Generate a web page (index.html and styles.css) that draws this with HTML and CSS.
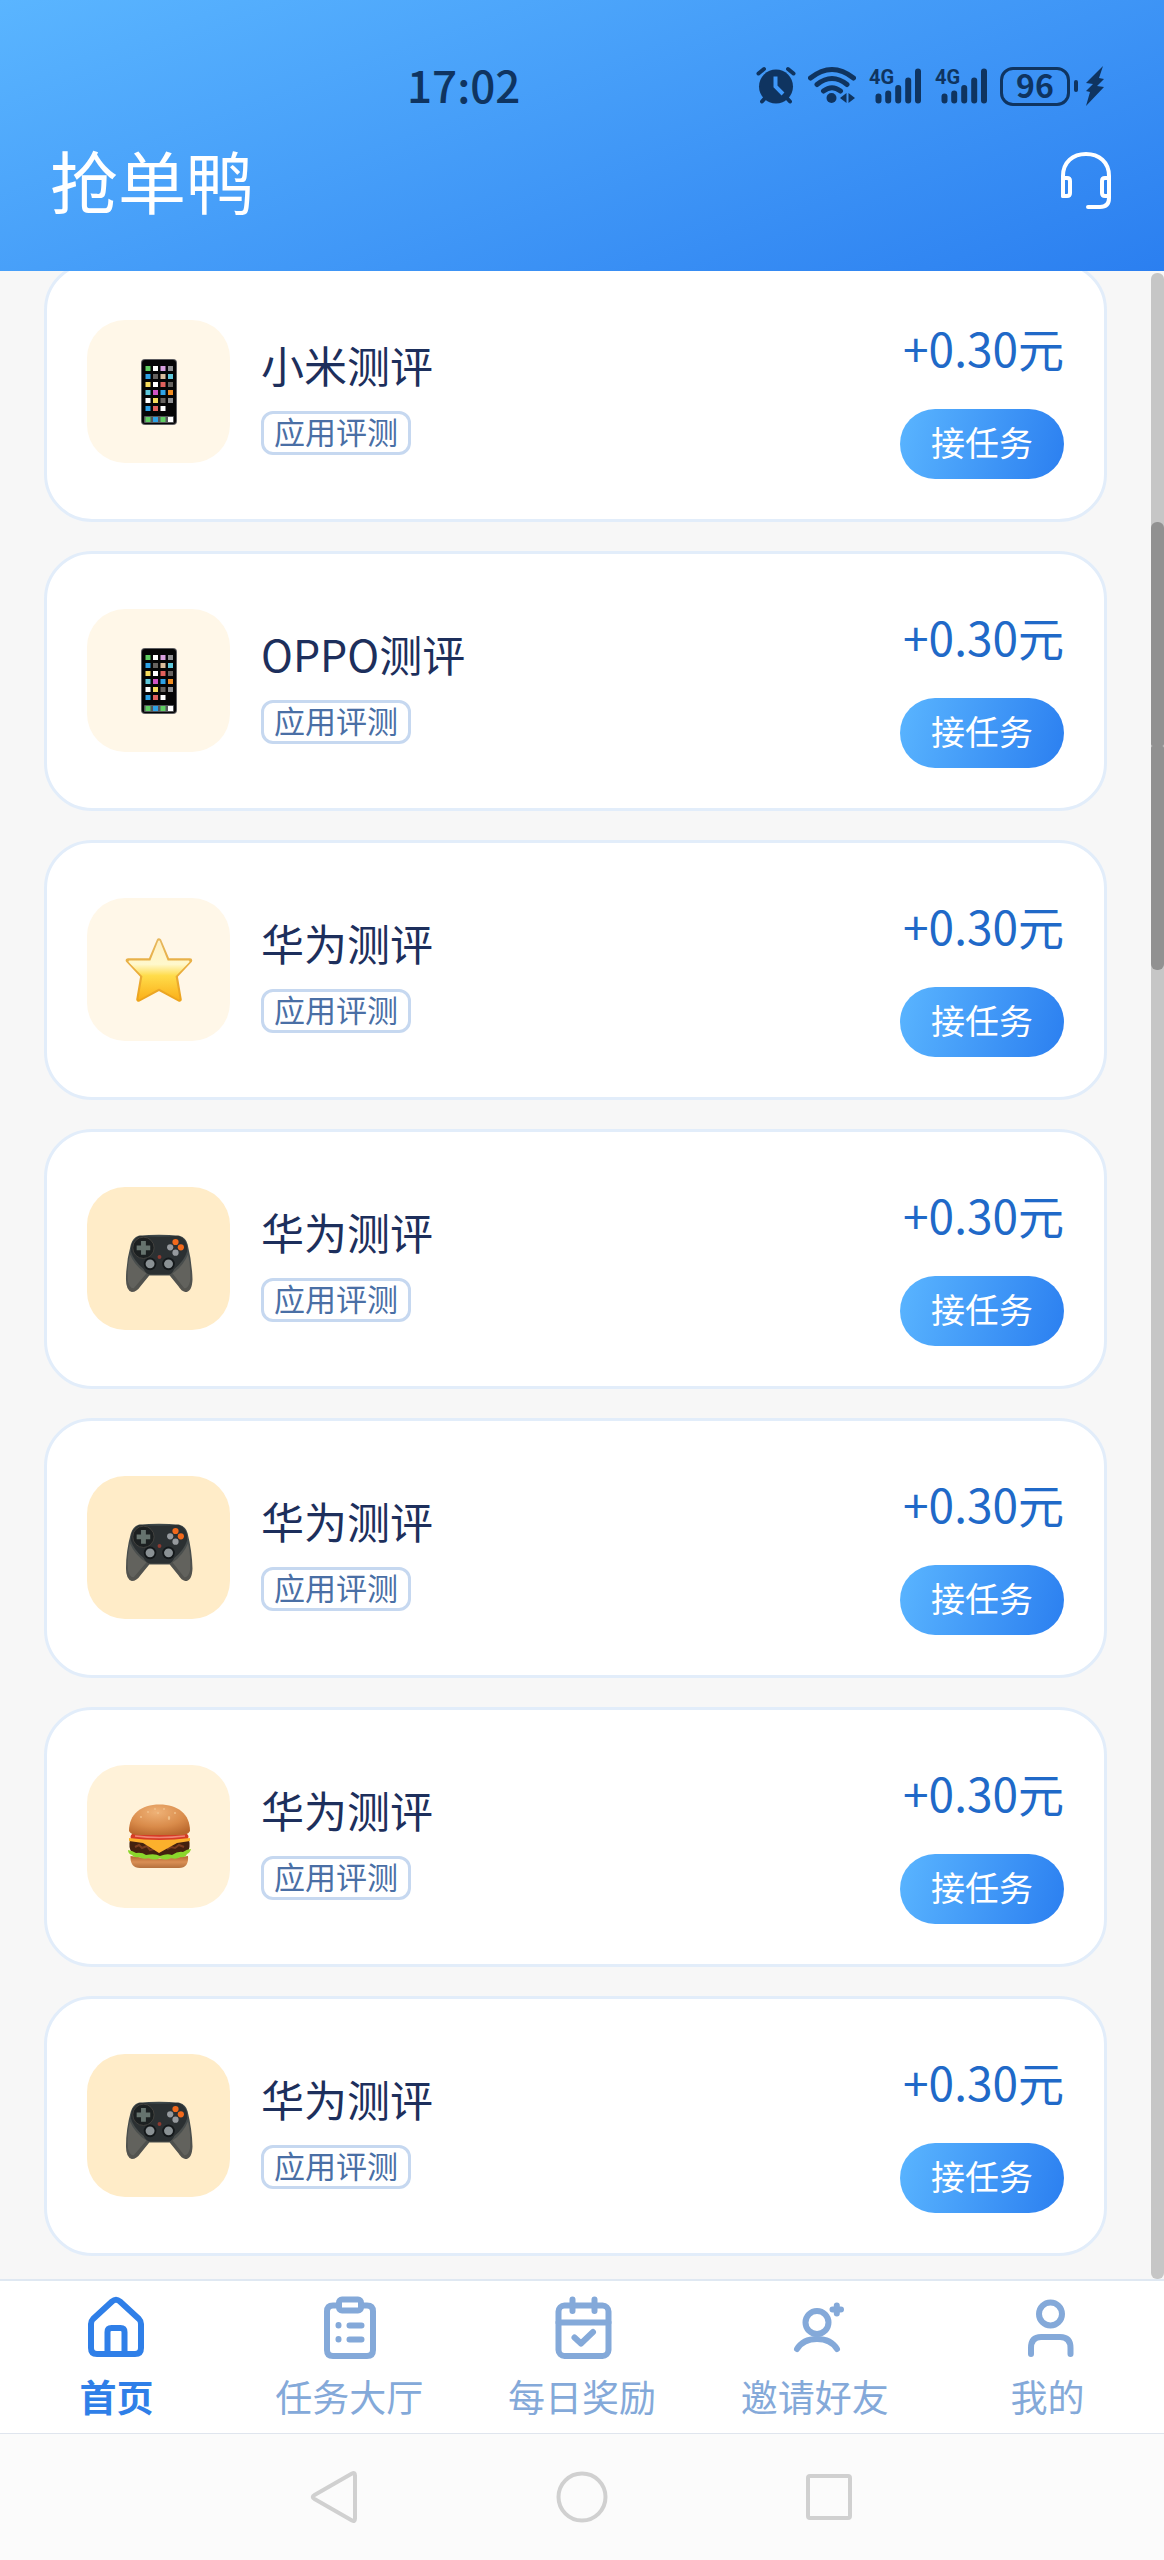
FILE: index.html
```html
<!DOCTYPE html>
<html lang="zh-CN">
<head>
<meta charset="utf-8">
<meta name="viewport" content="width=device-width, initial-scale=1">
<title>抢单鸭</title>
<link rel="stylesheet" href="styles.css">
</head>
<body>
<svg class="sprite" aria-hidden="true">
  <defs>
    <linearGradient id="star-fill" x1="0" y1="0" x2="0" y2="1">
      <stop offset="0" stop-color="#fff0c4"/><stop offset=".4" stop-color="#fff8cc"/><stop offset=".6" stop-color="#ffdc4a"/><stop offset="1" stop-color="#fbb21c"/>
    </linearGradient>
    <linearGradient id="star-edge" x1="0" y1="0" x2="0" y2="1">
      <stop offset="0" stop-color="#e6b75e"/><stop offset="1" stop-color="#eda41c"/>
    </linearGradient>
    <linearGradient id="pad-fill" x1="0" y1="0" x2="0" y2="1">
      <stop offset="0" stop-color="#3d474a"/><stop offset="1" stop-color="#55544f"/>
    </linearGradient>
    <radialGradient id="bun-fill" cx=".45" cy=".25" r=".8">
      <stop offset="0" stop-color="#efb277"/><stop offset=".6" stop-color="#d98b4a"/><stop offset="1" stop-color="#b9672c"/>
    </radialGradient>
    <linearGradient id="base-fill" x1="0" y1="0" x2="0" y2="1">
      <stop offset="0" stop-color="#b5652e"/><stop offset=".5" stop-color="#d98f55"/><stop offset="1" stop-color="#b5713d"/>
    </linearGradient>
  </defs>
  <symbol id="phone" viewBox="0 0 68 68">
    <rect x="16" y="1" width="36" height="66" rx="4" fill="#5c5c60"/>
    <rect x="17" y="2" width="34" height="64" rx="3" fill="#050506"/>
    <rect x="19" y="58" width="30" height="7" rx="1" fill="#55565a"/>
    <g fill="#5fce62"><path d="M20.500 8h5v5h-5zM20.500 59h5v5h-5zM35.500 59h5v5h-5z"/></g>
    <g fill="#fff"><path d="M28 8h5v5h-5zM28 24h5v5h-5zM20.500 40h5v5h-5zM35.500 48h5v5h-5zM43 59h5v5h-5z"/></g>
    <g fill="#d9a0e0"><path d="M35.500 8h5v5h-5z"/></g>
    <g fill="#8f8f92"><path d="M43 8h5v5h-5zM43 40h5v5h-5z"/></g>
    <g fill="#2ea2e6"><path d="M20.500 16h5v5h-5zM35.500 32h5v5h-5zM20.500 48h5v5h-5zM28 59h5v5h-5z"/></g>
    <g fill="#66625f"><path d="M28 16h5v5h-5zM43 24h5v5h-5zM35.500 40h5v5h-5z"/></g>
    <g fill="#dbbd9c"><path d="M35.500 16h5v5h-5z"/></g>
    <g fill="#5fc7da"><path d="M43 16h5v5h-5zM20.500 32h5v5h-5z"/></g>
    <g fill="#f6dc5c"><path d="M20.500 24h5v5h-5zM28 40h5v5h-5z"/></g>
    <g fill="#e0605c"><path d="M35.500 24h5v5h-5zM28 48h5v5h-5z"/></g>
    <path fill="#d052c4" d="M28 32h5v5h-5z"/>
    <path fill="#f08c22" d="M43 32h5v5h-5z"/>
  </symbol>
  <symbol id="star" viewBox="0 0 68 68">
    <path d="M34 4.500L42.500 24.500H65L50.500 40L54.500 63.500L34 52.500L13.500 63.500L17.500 40L3 24.500H25.500Z" fill="url(#star-edge)" stroke="url(#star-edge)" stroke-width="4.500" stroke-linejoin="round"/>
    <path d="M34 5.500L42 25.500H63.500L49.500 40L53.500 62.500L34 51.500L14.500 62.500L18.500 40L4.500 25.500H26Z" fill="url(#star-fill)" stroke="url(#star-fill)" stroke-width="2" stroke-linejoin="round"/>
  </symbol>
  <symbol id="gamepad" viewBox="0 0 68 70">
    <path d="M13 11Q34 9 55 11Q62 13 63.500 20Q68 38 68.500 56Q68 69 61 69Q57 68 54 63L45 52H24L15 63Q11 69 6 69Q0 67 0 56Q0 38 5 20Q7 13 13 11Z" fill="url(#pad-fill)"/>
    <path d="M14 11Q34 13 54 11Q64 15 63 27Q60 37 50 45Q47 51 44 51H25Q21 51 18 45Q8 37 5 27Q5 15 14 11Z" fill="#2b3032"/>
    <path d="M4 30Q1 44 2 58Q4 66 8 65L21 50Q9 42 4 30ZM64 30Q67 44 66 58Q64 66 60 65L48 50Q59 42 64 30Z" fill="#62625d"/>
    <circle cx="18" cy="23.500" r="11" fill="#1c2021" stroke="#43423f"/>
    <path d="M15.500 16.500h5v4.500h4.500v5h-4.500v4.500h-5v-4.500H11v-5h4.500z" fill="#66736e"/>
    <circle cx="51" cy="17.500" r="3.200" fill="#f2691b"/><circle cx="56.500" cy="23" r="3.200" fill="#f2691b"/>
    <circle cx="45.500" cy="23" r="3.200" fill="#969a9e"/><circle cx="51" cy="28.500" r="3.200" fill="#969a9e"/>
    <circle cx="24.800" cy="40" r="6.500" fill="#14181a"/><circle cx="43.800" cy="40" r="6.500" fill="#14181a"/>
    <circle cx="24.800" cy="40" r="4.600" fill="#8a9194"/><circle cx="43.800" cy="40" r="4.600" fill="#8a9194"/>
    <circle cx="34.500" cy="33" r="2" fill="#8e3a30"/>
  </symbol>
  <symbol id="burger" viewBox="0 0 68 68">
    <path d="M5.500 53Q34 58 63 53Q64 65 54 65H15Q5 65 5.500 53Z" fill="url(#base-fill)"/>
    <path d="M5 37H64Q66 44 62 50Q48 54 34 53Q18 54 7 50Q3 44 5 37Z" fill="#43210f"/>
    <path d="M10 44l4-2 3 3 5-2 3 4 4-1M42 46l4-2 4 1 4-3 5 2" stroke="#7a3d20" stroke-width="2" fill="none"/>
    <path d="M3 47Q8 48 11 50Q17 49 21 52Q30 50 35 53Q42 50 47 52Q53 48 58 49Q62 46 66 46Q65 50 62 51Q60 55 55 54Q51 57 46 55Q40 58 35 55Q29 58 24 55Q18 57 14 54Q9 55 7 52Q3 51 3 47Z" fill="#8bd62c"/>
    <path d="M7 31H62Q65 33 62 37H7Q4 34 7 31Z" fill="#d63c26"/>
    <path d="M10 33Q34 36 60 33" stroke="#f08272" stroke-width="1.500" fill="none"/>
    <path d="M4 35Q34 39 65 35V38L52 40L34 50L18 40L4 38Z" fill="#fcb02c"/>
    <path d="M4 28C4 11 16 1.500 34.500 1.500S65 11 65 28Q63 32 56 32H13Q6 32 4 28Z" fill="url(#bun-fill)"/>
    <g fill="#f0bf88"><circle cx="30" cy="6" r="1"/><circle cx="23" cy="9" r="1"/><circle cx="39" cy="6" r="1"/><circle cx="16" cy="14" r="1"/><ellipse cx="44" cy="15" rx="1.200" ry="2"/><circle cx="33" cy="10" r="1"/><circle cx="50" cy="10" r="1"/></g>
  </symbol>
</svg>

<header class="header">
  <div class="status">
    <time class="clock">17:02</time>
    <div class="indicators">
      <svg width="40" height="40" viewBox="0 0 40 40" aria-label="闹钟">
        <path d="M2.500 7.500L8 3M37.500 7.500L32 3M6 35.500L11 30M34 35.500L29 30" stroke="currentColor" stroke-width="4" stroke-linecap="round"/>
        <circle cx="20" cy="20.500" r="17" fill="currentColor"/>
        <path d="M19.500 10.500V20.500L27 28" fill="none" stroke="#3f98f9" stroke-width="4"/>
      </svg>
      <svg class="wifi" width="48" height="40" viewBox="0 0 48 40" aria-label="无线网络">
        <g fill="none" stroke="currentColor" stroke-width="5" stroke-linecap="round">
          <path d="M2.500 12Q24 -5 45.500 12M9 18.500Q24 6.500 39 18.500M15.500 25Q24 18.500 32.500 25"/>
        </g>
        <circle cx="23.500" cy="32" r="5" fill="currentColor"/>
        <path d="M38.500 27V37L32 32ZM40.500 27V37L47 32Z" fill="currentColor"/>
      </svg>
      <svg class="signal" width="53" height="40" viewBox="0 0 53 40">
        <path d="M10.500 30.500V34.500M20.200 27.500V34.500M30.200 22V34.500M40.200 14.500V34.500M50 5.500V34.500" stroke="currentColor" stroke-width="6" stroke-linecap="round"/>
        <text x="1" y="18" fill="currentColor">4G</text>
      </svg>
      <svg class="signal" width="53" height="40" viewBox="0 0 53 40">
        <path d="M10.500 30.500V34.500M20.200 27.500V34.500M30.200 22V34.500M40.200 14.500V34.500M50 5.500V34.500" stroke="currentColor" stroke-width="6" stroke-linecap="round"/>
        <text x="1" y="18" fill="currentColor">4G</text>
      </svg>
      <div class="battery">96</div>
      <svg width="30" height="42" viewBox="0 0 30 42" aria-label="充电中">
        <rect x="0" y="15" width="4" height="12" rx="2" fill="currentColor"/>
        <path d="M29 1L12 18L19 19L12 26L16 27L12 41L30 22L23 21L30 14L25 13Z" fill="currentColor"/>
      </svg>
    </div>
  </div>
  <div class="titlebar">
    <h1 class="brand">抢单鸭</h1>
    <button class="service" type="button" aria-label="客服">
      <svg width="52" height="60" viewBox="0 0 52 60" fill="none" stroke="currentColor" stroke-width="4" stroke-linecap="round" stroke-linejoin="round">
        <path d="M3 46V26C3 12 13 4 26 4S49 12 49 26V48Q49 57 40 57H28"/>
        <path d="M3 28H7Q10 28 10 31V43Q10 46 7 46H3M49 28H45Q42 28 42 31V43Q42 46 45 46H49"/>
      </svg>
    </button>
  </div>
</header>

<main class="content">
  <ul class="tasks">
    <li class="task">
      <div class="tile"><svg><use href="#phone"/></svg></div>
      <div class="info"><h2 class="name">小米测评</h2><span class="tag">应用评测</span></div>
      <div class="action"><span class="price">+0.30元</span><button class="accept" type="button">接任务</button></div>
    </li>
    <li class="task">
      <div class="tile"><svg><use href="#phone"/></svg></div>
      <div class="info"><h2 class="name">OPPO测评</h2><span class="tag">应用评测</span></div>
      <div class="action"><span class="price">+0.30元</span><button class="accept" type="button">接任务</button></div>
    </li>
    <li class="task">
      <div class="tile"><svg><use href="#star"/></svg></div>
      <div class="info"><h2 class="name">华为测评</h2><span class="tag">应用评测</span></div>
      <div class="action"><span class="price">+0.30元</span><button class="accept" type="button">接任务</button></div>
    </li>
    <li class="task">
      <div class="tile game"><svg><use href="#gamepad"/></svg></div>
      <div class="info"><h2 class="name">华为测评</h2><span class="tag">应用评测</span></div>
      <div class="action"><span class="price">+0.30元</span><button class="accept" type="button">接任务</button></div>
    </li>
    <li class="task">
      <div class="tile game"><svg><use href="#gamepad"/></svg></div>
      <div class="info"><h2 class="name">华为测评</h2><span class="tag">应用评测</span></div>
      <div class="action"><span class="price">+0.30元</span><button class="accept" type="button">接任务</button></div>
    </li>
    <li class="task">
      <div class="tile food"><svg><use href="#burger"/></svg></div>
      <div class="info"><h2 class="name">华为测评</h2><span class="tag">应用评测</span></div>
      <div class="action"><span class="price">+0.30元</span><button class="accept" type="button">接任务</button></div>
    </li>
    <li class="task">
      <div class="tile game"><svg><use href="#gamepad"/></svg></div>
      <div class="info"><h2 class="name">华为测评</h2><span class="tag">应用评测</span></div>
      <div class="action"><span class="price">+0.30元</span><button class="accept" type="button">接任务</button></div>
    </li>
  </ul>
  <div class="scrollbar" aria-hidden="true">
    <div class="thumb"></div>
    <div class="thumb"></div>
  </div>
</main>

<nav class="tabs" aria-label="主导航">
  <a class="tab active" href="#home" aria-current="page">
    <svg viewBox="0 0 68 68"><path d="M9 30Q9 27 11 25L30 7.500Q34 4 38 7.500L57 25Q59 27 59 30V54Q59 60 53 60H15Q9 60 9 54ZM25.500 60V38Q25.500 34 29.500 34H38.500Q42.500 34 42.500 38V60"/></svg>
    <span>首页</span>
  </a>
  <a class="tab" href="#hall">
    <svg viewBox="0 0 68 68"><path d="M24 11.500H18Q12 11.500 12 17.500V56Q12 62 18 62H52Q58 62 58 56V17.500Q58 11.500 52 11.500H46"/><rect x="24" y="5.500" width="22" height="11" rx="3"/><path d="M23.500 31V31.500M23.500 45V45.500M34.500 31.500H46.500M34.500 45.500H46.500"/></svg>
    <span>任务大厅</span>
  </a>
  <a class="tab" href="#daily">
    <svg viewBox="0 0 68 68"><rect x="10.500" y="11.500" width="50" height="50.500" rx="6"/><path d="M10.500 28.500H60.500M24.500 5.500V17M46.500 5.500V17M26.500 43.500L33 49.500L45 38"/></svg>
    <span>每日奖励</span>
  </a>
  <a class="tab" href="#invite">
    <svg viewBox="0 0 68 68"><circle cx="36" cy="28.500" r="11.500"/><path d="M16 55Q22 45 36 45T56 55M51.500 15.500H60M55.800 11.500V19.500"/></svg>
    <span>邀请好友</span>
  </a>
  <a class="tab" href="#me">
    <svg viewBox="0 0 68 68"><circle cx="36.500" cy="20" r="11.500"/><path d="M17 60V54Q17 43 27 43H46Q56.500 43 56.500 54V60"/></svg>
    <span>我的</span>
  </a>
</nav>

<footer class="sysnav">
  <button type="button" aria-label="返回"><svg viewBox="0 0 52 52"><path d="M5.500 24L43 2.500Q46 1 46 4.500V47.500Q46 51 43 49.500L5.500 28Q2 26 5.500 24Z"/></svg></button>
  <button type="button" aria-label="主屏幕"><svg viewBox="0 0 52 52"><circle cx="26" cy="26" r="23.500"/></svg></button>
  <button type="button" aria-label="最近任务"><svg viewBox="0 0 52 52"><rect x="5" y="5" width="42" height="42" rx="2"/></svg></button>
</footer>
</body>
</html>
```
FILE: styles.css
```css
* {
  box-sizing: border-box;
}

body {
  display: flex;
  flex-direction: column;
  min-height: 100vh;
  margin: 0;
  background: #f7f7f7;
  font-family: "Noto Sans CJK SC", sans-serif;
}

h1,
h2,
ul {
  margin: 0;
  padding: 0;
  font-weight: 400;
  list-style: none;
}

button {
  padding: 0;
  border: 0;
  background: none;
  font: inherit;
}

.sprite {
  position: absolute;
  width: 0;
  height: 0;
}

/* Header */

.header {
  padding: 60px 52px 46px 50px;
  background: linear-gradient(160deg, #5ab5ff, #2b7ff0);
}

.status {
  display: flex;
  align-items: center;
  justify-content: space-between;
  height: 52px;
  margin-bottom: 23px;
  padding-right: 8px;
  padding-left: 357px;
  color: #0f3460;
}

.clock {
  padding-bottom: 4px;
  font-size: 44px;
  font-weight: 500;
  line-height: 48px;
}

.indicators {
  display: flex;
  align-items: center;
}

.wifi {
  margin: 0 12px;
}

.signal {
  margin-right: 13px;
  overflow: visible;
  font-family: Roboto, sans-serif;
  font-size: 20px;
  font-weight: 700;
}

.battery {
  width: 70px;
  height: 39px;
  margin-right: 4px;
  border: 3px solid;
  border-radius: 13px;
  font-size: 32px;
  font-weight: 700;
  line-height: 29px;
  text-align: center;
}

.titlebar {
  display: flex;
  align-items: center;
  justify-content: space-between;
  height: 90px;
  color: #fff;
}

.brand {
  font-size: 68px;
  line-height: 90px;
}

.service {
  display: flex;
  color: inherit;
}

/* Task list */

.content {
  display: flex;
  flex: 1;
  overflow: hidden;
}

.tasks {
  display: flex;
  flex: 1;
  flex-direction: column;
  gap: 29px;
  margin-top: -9px;
  padding: 0 44px 23px;
}

.task {
  display: flex;
  align-items: flex-start;
  padding: 55px 40px 40px;
  border: 3px solid #e2edfa;
  border-radius: 48px;
  background: #fff;
}

.tile {
  display: flex;
  align-items: center;
  justify-content: center;
  width: 143px;
  height: 143px;
  margin-right: 31px;
  border-radius: 38px;
  background: #fff7e8;
}

.tile.game {
  background: #ffecc8;
}

.tile.food {
  background: #fff2d9;
}

.tile svg {
  width: 68px;
  height: 68px;
}

.info {
  display: flex;
  flex: 1;
  flex-direction: column;
  align-items: flex-start;
  gap: 20px;
  padding-top: 17px;
}

.name {
  color: #1d2f5c;
  font-size: 43px;
  line-height: 54px;
}

.tag {
  padding: 0 10px 4px;
  border: 3px solid #c6d8f0;
  border-radius: 12px;
  color: #4a6fa5;
  font-size: 31px;
  line-height: 34px;
}

.action {
  display: flex;
  flex-direction: column;
  align-items: flex-end;
  gap: 35px;
}

.price {
  color: #2069c8;
  font-size: 46px;
  line-height: 54px;
}

.accept {
  padding: 0 31px 4px;
  border-radius: 35px;
  background: linear-gradient(105deg, #5ab5ff, #2b7ff0);
  color: #fff;
  font-size: 34px;
  line-height: 66px;
}

/* Scrollbar: the flex factors give the thumb's place in the track */

.scrollbar {
  display: flex;
  flex-direction: column;
  width: 13px;
  margin-top: 2px;
  border-radius: 6px;
  background: #c6c6c6;
}

.scrollbar::before {
  flex: 249;
  content: "";
}

.scrollbar::after {
  flex: 1308;
  content: "";
}

.thumb {
  flex: 224;
  border-radius: 6px 6px 2px 2px;
  background: #919191;
}

.thumb + .thumb {
  border-radius: 2px 2px 6px 6px;
}

/* Bottom navigation */

.tabs {
  display: flex;
  border-top: 2px solid #dfe8f2;
  border-bottom: 1px solid #dfe5ee;
  background: #fff;
}

.tab {
  display: flex;
  flex: 1;
  flex-direction: column;
  align-items: center;
  gap: 12px;
  padding: 13px 0 15px;
  color: #84a9d9;
  font-size: 37px;
  line-height: 44px;
  text-decoration: none;
}

.tab.active {
  color: #2f7fe8;
  font-weight: 700;
}

.tab svg {
  width: 68px;
  height: 68px;
  fill: none;
  stroke: currentColor;
  stroke-width: 6px;
  stroke-linecap: round;
  stroke-linejoin: round;
}

.sysnav {
  display: flex;
  align-items: center;
  justify-content: center;
  gap: 195px;
  height: 126px;
  background: #fbfbfb;
}

.sysnav button {
  display: flex;
}

.sysnav svg {
  width: 52px;
  height: 52px;
  fill: none;
  stroke: #d0d0d0;
  stroke-width: 4px;
  stroke-linejoin: round;
}
```
